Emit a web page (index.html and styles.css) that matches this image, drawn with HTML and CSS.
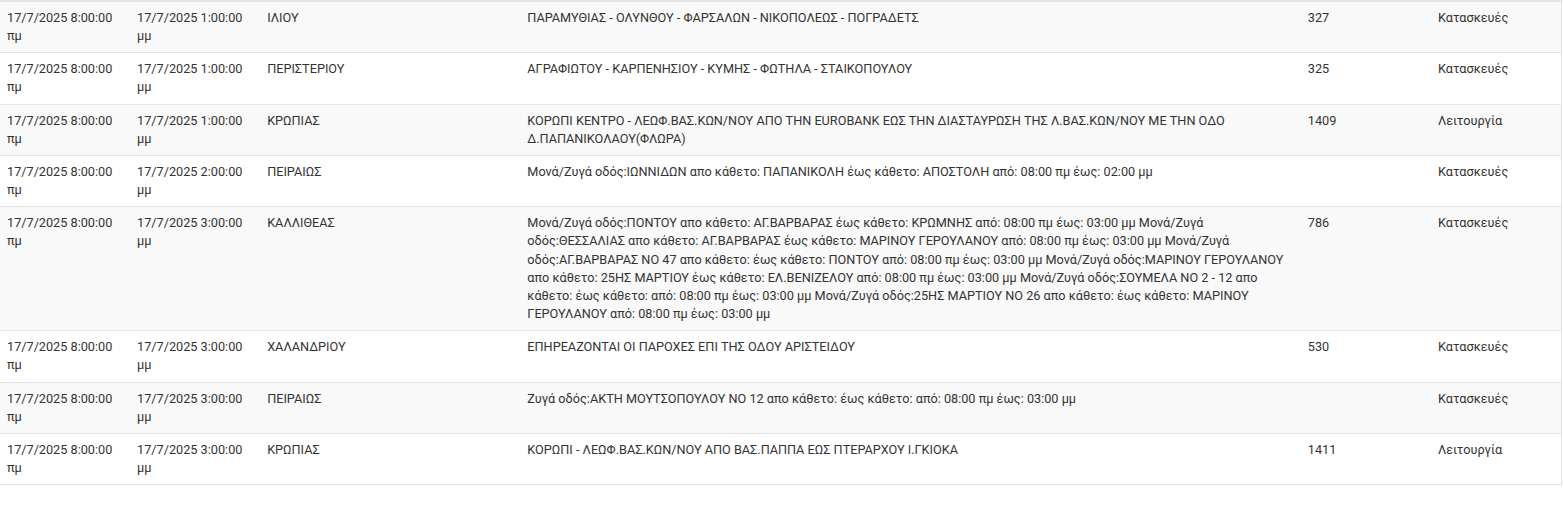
FILE: index.html
```html
<!DOCTYPE html>
<html lang="el">
<head>
    <meta charset="UTF-8">
    <meta name="viewport" content="width=device-width, initial-scale=1.0">
    <title>Διακοπές ρεύματος</title>
    <link rel="stylesheet" href="styles.css">
</head>
<body>
    <div class="table-wrap">
        <table class="outages">
            <colgroup>
                <col class="col-sm">
                <col class="col-sm">
                <col class="col-md">
                <col class="col-lg">
                <col class="col-sm">
                <col class="col-sm">
            </colgroup>
            <tbody>
                <tr>
                    <td>17/7/2025 8:00:00 πμ</td>
                    <td>17/7/2025 1:00:00 μμ</td>
                    <td>ΙΛΙΟΥ</td>
                    <td>ΠΑΡΑΜΥΘΙΑΣ - ΟΛΥΝΘΟΥ - ΦΑΡΣΑΛΩΝ - ΝΙΚΟΠΟΛΕΩΣ - ΠΟΓΡΑΔΕΤΣ</td>
                    <td>327</td>
                    <td>Κατασκευές</td>
                </tr>
                <tr>
                    <td>17/7/2025 8:00:00 πμ</td>
                    <td>17/7/2025 1:00:00 μμ</td>
                    <td>ΠΕΡΙΣΤΕΡΙΟΥ</td>
                    <td>ΑΓΡΑΦΙΩΤΟΥ - ΚΑΡΠΕΝΗΣΙΟΥ - ΚΥΜΗΣ - ΦΩΤΗΛΑ - ΣΤΑΙΚΟΠΟΥΛΟΥ</td>
                    <td>325</td>
                    <td>Κατασκευές</td>
                </tr>
                <tr>
                    <td>17/7/2025 8:00:00 πμ</td>
                    <td>17/7/2025 1:00:00 μμ</td>
                    <td>ΚΡΩΠΙΑΣ</td>
                    <td>ΚΟΡΩΠΙ ΚΕΝΤΡΟ - ΛΕΩΦ.ΒΑΣ.ΚΩΝ/ΝΟΥ ΑΠΟ ΤΗΝ EUROBANK ΕΩΣ ΤΗΝ ΔΙΑΣΤΑΥΡΩΣΗ ΤΗΣ Λ.ΒΑΣ.ΚΩΝ/ΝΟΥ ΜΕ ΤΗΝ ΟΔΟ Δ.ΠΑΠΑΝΙΚΟΛΑΟΥ(ΦΛΩΡΑ)</td>
                    <td>1409</td>
                    <td>Λειτουργία</td>
                </tr>
                <tr>
                    <td>17/7/2025 8:00:00 πμ</td>
                    <td>17/7/2025 2:00:00 μμ</td>
                    <td>ΠΕΙΡΑΙΩΣ</td>
                    <td>Μονά/Ζυγά οδός:ΙΩΝΝΙΔΩΝ απο κάθετο: ΠΑΠΑΝΙΚΟΛΗ έως κάθετο: ΑΠΟΣΤΟΛΗ από: 08:00 πμ έως: 02:00 μμ</td>
                    <td></td>
                    <td>Κατασκευές</td>
                </tr>
                <tr>
                    <td>17/7/2025 8:00:00 πμ</td>
                    <td>17/7/2025 3:00:00 μμ</td>
                    <td>ΚΑΛΛΙΘΕΑΣ</td>
                    <td>Μονά/Ζυγά οδός:ΠΟΝΤΟΥ απο κάθετο: ΑΓ.ΒΑΡΒΑΡΑΣ έως κάθετο: ΚΡΩΜΝΗΣ από: 08:00 πμ έως: 03:00 μμ Μονά/Ζυγά οδός:ΘΕΣΣΑΛΙΑΣ απο κάθετο: ΑΓ.ΒΑΡΒΑΡΑΣ έως κάθετο: ΜΑΡΙΝΟΥ ΓΕΡΟΥΛΑΝΟΥ από: 08:00 πμ έως: 03:00 μμ Μονά/Ζυγά οδός:ΑΓ.ΒΑΡΒΑΡΑΣ ΝΟ 47 απο κάθετο: έως κάθετο: ΠΟΝΤΟΥ από: 08:00 πμ έως: 03:00 μμ Μονά/Ζυγά οδός:ΜΑΡΙΝΟΥ ΓΕΡΟΥΛΑΝΟΥ απο κάθετο: 25ΗΣ ΜΑΡΤΙΟΥ έως κάθετο: ΕΛ.ΒΕΝΙΖΕΛΟΥ από: 08:00 πμ έως: 03:00 μμ Μονά/Ζυγά οδός:ΣΟΥΜΕΛΑ ΝΟ 2 - 12 απο κάθετο: έως κάθετο: από: 08:00 πμ έως: 03:00 μμ Μονά/Ζυγά οδός:25ΗΣ ΜΑΡΤΙΟΥ ΝΟ 26 απο κάθετο: έως κάθετο: ΜΑΡΙΝΟΥ ΓΕΡΟΥΛΑΝΟΥ από: 08:00 πμ έως: 03:00 μμ</td>
                    <td>786</td>
                    <td>Κατασκευές</td>
                </tr>
                <tr>
                    <td>17/7/2025 8:00:00 πμ</td>
                    <td>17/7/2025 3:00:00 μμ</td>
                    <td>ΧΑΛΑΝΔΡΙΟΥ</td>
                    <td>ΕΠΗΡΕΑΖΟΝΤΑΙ ΟΙ ΠΑΡΟΧΕΣ ΕΠΙ ΤΗΣ ΟΔΟΥ ΑΡΙΣΤΕΙΔΟΥ</td>
                    <td>530</td>
                    <td>Κατασκευές</td>
                </tr>
                <tr>
                    <td>17/7/2025 8:00:00 πμ</td>
                    <td>17/7/2025 3:00:00 μμ</td>
                    <td>ΠΕΙΡΑΙΩΣ</td>
                    <td>Ζυγά οδός:ΑΚΤΗ ΜΟΥΤΣΟΠΟΥΛΟΥ ΝΟ 12 απο κάθετο: έως κάθετο: από: 08:00 πμ έως: 03:00 μμ</td>
                    <td></td>
                    <td>Κατασκευές</td>
                </tr>
                <tr>
                    <td>17/7/2025 8:00:00 πμ</td>
                    <td>17/7/2025 3:00:00 μμ</td>
                    <td>ΚΡΩΠΙΑΣ</td>
                    <td>ΚΟΡΩΠΙ - ΛΕΩΦ.ΒΑΣ.ΚΩΝ/ΝΟΥ ΑΠΟ ΒΑΣ.ΠΑΠΠΑ ΕΩΣ ΠΤΕΡΑΡΧΟΥ Ι.ΓΚΙΟΚΑ</td>
                    <td>1411</td>
                    <td>Λειτουργία</td>
                </tr>
            </tbody>
        </table>
    </div>
</body>
</html>
```

FILE: styles.css
```css
body {
    margin: 0;
    padding: 0;
    background-color: #fff;
    font-family: Roboto, "Noto Sans", sans-serif;
    font-size: 12.7px;
    color: #333;
}
.table-wrap {
    width: 1562px;
    border-right: 1px solid #e3e3e3;
    border-top: 2px solid #e3e3e3;
    box-sizing: border-box;
}
.outages {
    width: 100%;
    border-collapse: collapse;
    table-layout: fixed;
}
.col-sm {
    width: 8.333%;
}
.col-md {
    width: 16.667%;
}
.col-lg {
    width: 50%;
}
.outages td {
    padding: 7px 5px 7px 7px;
    line-height: 18.15px;
    vertical-align: top;
    border-bottom: 1px solid #e4e4e4;
}
.outages tr:nth-child(odd) {
    background-color: #f9f9f9;
}
```
